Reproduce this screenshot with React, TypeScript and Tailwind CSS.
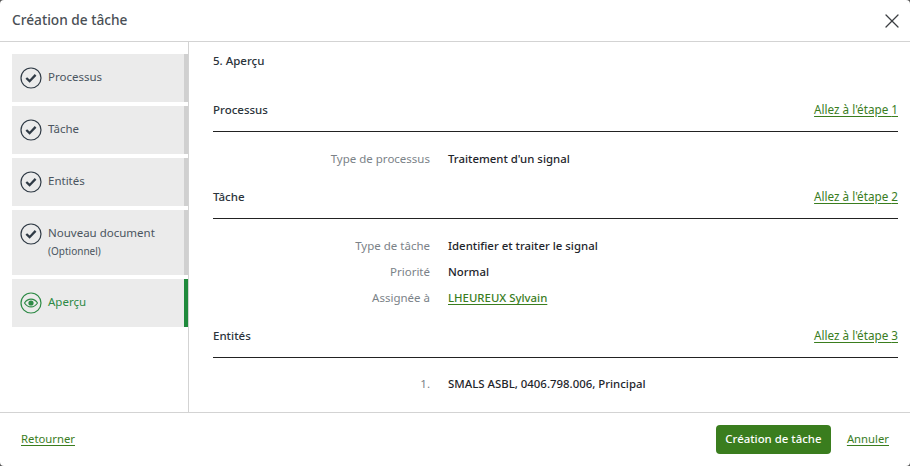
import React from "react";
import { X } from "lucide-react";

const font = "font-['Noto_Sans',sans-serif]";

const CheckIcon = () => (
  <svg width="22" height="22" viewBox="0 0 22 22" fill="none" className="shrink-0">
    <circle cx="11" cy="11" r="10" stroke="#2f3a45" strokeWidth="1.2" />
    <path d="M6.300 11l3.300 3.200 6-6.300" stroke="#2f3a45" strokeWidth="2.300" />
  </svg>
);

const EyeIcon = () => (
  <svg width="22" height="22" viewBox="0 0 22 22" fill="none" className="shrink-0">
    <circle cx="11" cy="11" r="10" stroke="#2d8a45" strokeWidth="1.2" />
    <path d="M4.500 11c1.600-2.600 3.800-3.900 6.500-3.900s4.900 1.300 6.500 3.900c-1.600 2.600-3.800 3.900-6.500 3.900S6.100 13.600 4.500 11z" stroke="#2d8a45" strokeWidth="1.100" />
    <circle cx="11" cy="11" r="2.600" fill="#2d8a45" />
  </svg>
);

const Step = ({ label, sub, active }: { label: string; sub?: string; active?: boolean }) => (
  <div
    className={`flex gap-[6px] pl-[8px] bg-[#ebebeb] border-r-4 ${
      active ? "border-[#1f8a3c] text-[#2d8a45]" : "border-[#d0d0d0] text-[#4a5560]"
    } ${sub ? "h-[65px] items-start pt-[13px]" : "h-[48px] items-center"}`}
  >
    {active ? <EyeIcon /> : <CheckIcon />}
    <div className={sub ? "mt-[1px]" : "-mt-[2px]"}>
      <div className="text-[11.5px] leading-[18px]">{label}</div>
      {sub && <div className="text-[10px] leading-[18px]">{sub}</div>}
    </div>
  </div>
);

const SectionHead = ({ title, step }: { title: string; step: number }) => (
  <div className="flex items-center justify-between h-[44px] border-b border-[#222] pt-[1px]">
    <span className="text-[11.5px] font-medium text-[#2b333b]">{title}</span>
    <a className="text-[11.7px] text-[#3a7d1e] underline underline-offset-2">Allez à l'étape {step}</a>
  </div>
);

const Row = ({ label, value, link }: { label: string; value: string; link?: boolean }) => (
  <div className="flex h-[26px] items-center">
    <span className="w-[217px] text-right text-[11.5px] text-[#7b8288]">{label}</span>
    <span className={`ml-[18px] text-[11.4px] font-medium ${link ? "text-[#3a7d1e] underline underline-offset-2" : "text-[#1e252b]"}`}>
      {value}
    </span>
  </div>
);

export default function App() {
  return (
    <div className={`${font} w-[910px] h-[466px] bg-[#555] overflow-hidden`}>
      <div className="w-full h-full bg-white rounded-[4px] flex flex-col">
        <header className="h-[42px] shrink-0 border-b border-[#d3d3d3] flex items-center justify-between pl-[12px] pr-[6px]">
          <h1 className="text-[13.7px] font-medium text-[#4a4f55] -mt-[1px]">Création de tâche</h1>
          <X size={24} strokeWidth={1.3} className="text-[#3c3f42]" />
        </header>
        <div className="flex flex-1 min-h-0">
          <aside className="w-[189px] shrink-0 border-r border-[#d3d3d3] pl-[12px] pt-[12px] flex flex-col gap-[4px]">
            <Step label="Processus" />
            <Step label="Tâche" />
            <Step label="Entités" />
            <Step label="Nouveau document" sub="(Optionnel)" />
            <Step label="Aperçu" active />
          </aside>
          <main className="flex-1 pl-[24px] pr-[12px] overflow-hidden">
            <div className="text-[11.5px] font-medium text-[#2b333b] mt-[10px] leading-[18px]">5. Aperçu</div>
            <div className="mt-[18px]">
              <SectionHead title="Processus" step={1} />
            </div>
            <div className="pt-[14px]">
              <Row label="Type de processus" value="Traitement d'un signal" />
            </div>
            <div className="mt-[3px]">
              <SectionHead title="Tâche" step={2} />
            </div>
            <div className="pt-[14px]">
              <Row label="Type de tâche" value="Identifier et traiter le signal" />
              <Row label="Priorité" value="Normal" />
              <Row label="Assignée à" value="LHEUREUX Sylvain" link />
            </div>
            <div className="mt-[3px]">
              <SectionHead title="Entités" step={3} />
            </div>
            <div className="pt-[13px]">
              <Row label="1." value="SMALS ASBL, 0406.798.006, Principal" />
            </div>
          </main>
        </div>
        <footer className="h-[54px] shrink-0 border-t border-[#d3d3d3] flex items-center justify-between pl-[21px] pr-[21px]">
          <a className="text-[11.3px] text-[#3a7d1e] underline underline-offset-2 -mt-[1px]">Retourner</a>
          <div className="flex items-center gap-[16px]">
            <button className="h-[29px] w-[115px] rounded-[4px] bg-[#3a7d1e] text-white text-[11.4px] font-medium pb-[1px]">Création de tâche</button>
            <a className="text-[11.3px] text-[#3a7d1e] underline underline-offset-2 -mt-[1px]">Annuler</a>
          </div>
        </footer>
      </div>
    </div>
  );
}
